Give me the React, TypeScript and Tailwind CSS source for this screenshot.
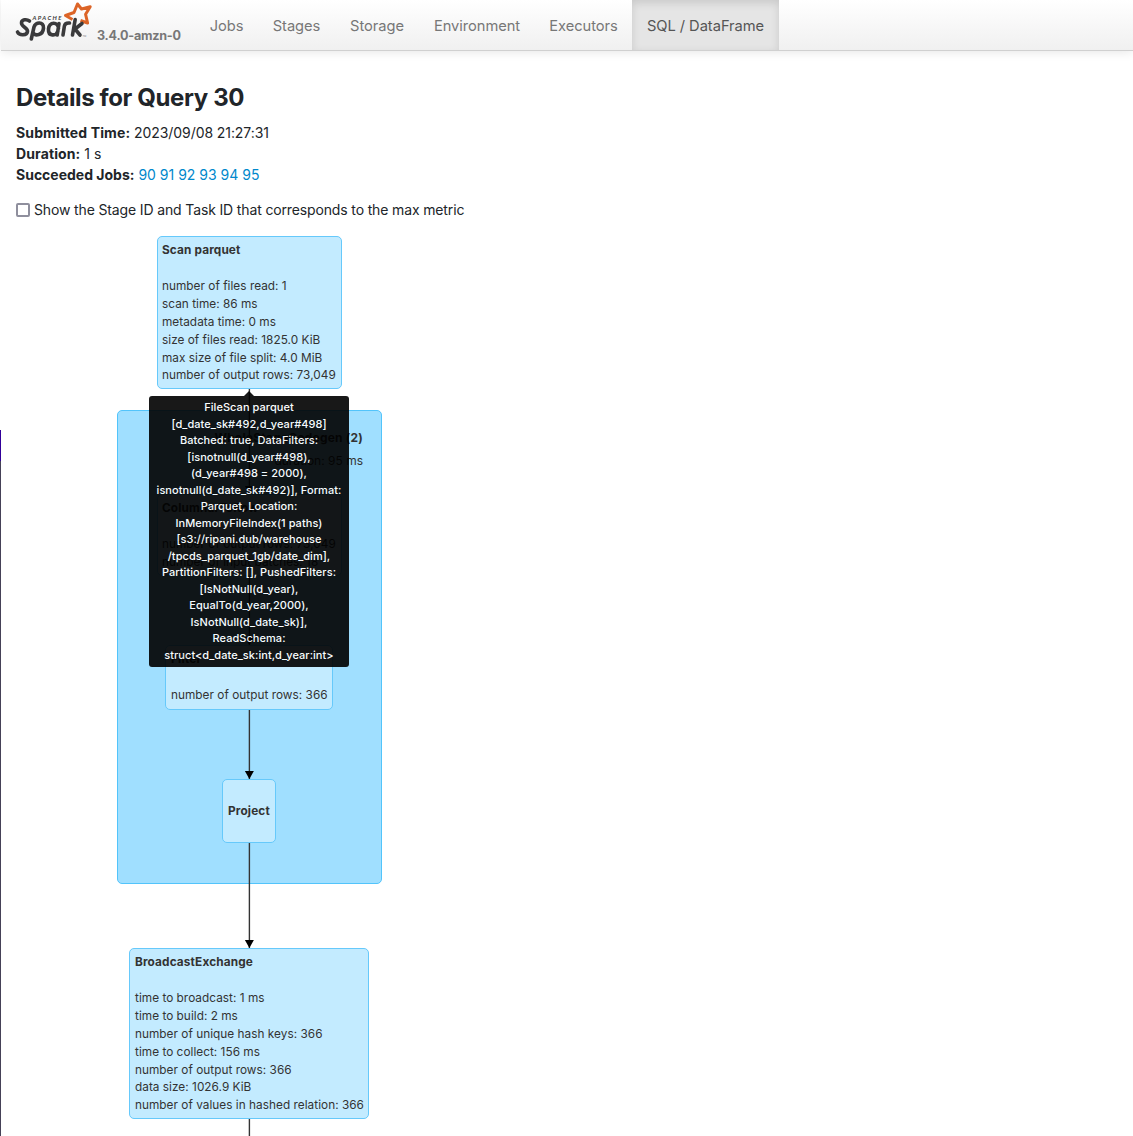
import React from "react";

const navItems = [
  { label: "Jobs", cls: "w-[63px]" },
  { label: "Stages", cls: "w-[77px]" },
  { label: "Storage", cls: "w-[84px]" },
  { label: "Environment", cls: "w-[116px]" },
  { label: "Executors", cls: "w-[97px]" },
];

function SparkLogo() {
  return (
    <svg className="mt-px h-[42px] w-[80px] shrink-0" viewBox="0 0 80 42" fill="none">
      <path
        d="M57.500 18.500 L50.500 14.500 L59 11.500 L62.500 3 L66.500 8 L75.200 5.700 L70.600 13.300 L72.600 22 L65.500 19.500"
        stroke="#dc6427"
        strokeWidth="3"
        strokeLinejoin="round"
      />
      <g stroke="#3a3a3c" strokeWidth="3.6" strokeLinecap="round" strokeLinejoin="round">
        <path d="M14.500 20 C11.500 17.800 6.500 18.500 6.500 22 C6.500 26 13 26.500 12.500 30.500 C12 34.500 4.500 35 2.500 31" />
        <path d="M16.300 38 L19 26 C20.300 20.500 29 20.500 28.500 27 C28 34.500 20 35.500 18 31.500" />
        <path d="M44 22.500 L42.200 34 M43.500 27.500 C43 20.500 34.500 20.500 33.500 28 C33 35.500 41 35.500 43 30" />
        <path d="M48 34 L49.400 25 C50 22 52 21.800 54.500 22" />
        <path d="M57.500 34 L60.200 18.500 M67 22.500 L60 28 L65 34" />
      </g>
      <text x="17.500" y="19" fill="#3a3a3c" className="font-['Lato'] text-[6px] font-bold italic" textLength="29" lengthAdjust="spacing">APACHE</text>
      <text x="67.500" y="36" fill="#777777" className="font-['Inter'] text-[2.5px]">TM</text>
    </svg>
  );
}

function Header() {
  return (
    <header className="ml-px flex h-[51px] items-stretch border-b border-[#d0d0d0] bg-linear-to-b from-white to-[#f0f0f0] pl-[14px] shadow-[0_1px_10px_rgba(0,0,0,0.1)]">
      <SparkLogo />
      <span className="mt-[26px] w-[100px] pl-[2px] text-[12.6px] leading-[20px] font-bold tracking-[-0.25px] text-[#777777]">3.4.0-amzn-0</span>
      <nav className="flex items-stretch text-[14.7px] leading-[52px] tracking-[-0.05px] text-[#777777]">
        {navItems.map((n) => (
          <a key={n.label} className={`block h-[50px] whitespace-nowrap text-center ${n.cls}`}>{n.label}</a>
        ))}
        <a className="block h-[50px] w-[147px] whitespace-nowrap bg-[#e5e5e5] text-center text-[#555555] shadow-[inset_0_3px_8px_rgba(0,0,0,0.125)]">SQL / DataFrame</a>
      </nav>
    </header>
  );
}

function Arrow({ cls }: { cls: string }) {
  return (
    <svg className={`absolute left-[244px] w-[11px] ${cls}`} fill="none">
      <line x1="5.400" y1="0" x2="5.400" y2="100%" stroke="#333333" strokeWidth="1.400" />
      <svg y="100%" overflow="visible"><path d="M0.900 -8 H9.900 L5.400 0 Z" fill="#000000" /></svg>
    </svg>
  );
}

function Node({ cls, title, lines }: { cls: string; title: string; lines: string[] }) {
  return (
    <div className={`absolute rounded-[5px] border border-[#66c9fb] bg-[#c3ebff] text-[11.8px] leading-[17.9px] text-[#333333] ${cls}`}>
      <div className="mb-[18px] whitespace-nowrap font-bold tracking-[0.14px]">{title}</div>
      {lines.map((l) => (
        <div key={l} className="whitespace-nowrap tracking-[0.03px]">{l}</div>
      ))}
    </div>
  );
}

const tooltip = [
  "FileScan parquet",
  "[d_date_sk#492,d_year#498]",
  "Batched: true, DataFilters:",
  "[isnotnull(d_year#498),",
  "(d_year#498 = 2000),",
  "isnotnull(d_date_sk#492)], Format:",
  "Parquet, Location:",
  "InMemoryFileIndex(1 paths)",
  "[s3://ripani.dub/warehouse",
  "/tpcds_parquet_1gb/date_dim],",
  "PartitionFilters: [], PushedFilters:",
  "[IsNotNull(d_year),",
  "EqualTo(d_year,2000),",
  "IsNotNull(d_date_sk)],",
  "ReadSchema:",
  "struct<d_date_sk:int,d_year:int>",
];

function Plan() {
  return (
    <div className="absolute inset-0">
      <div className="absolute left-[117px] top-[410px] h-[473.500px] w-[265px] rounded-[5px] border border-[#52c4fb] bg-[#a0dfff] pr-[18px] pt-[18px] text-right text-[12px] leading-[18px] text-[#333333]">
        <div className="font-bold tracking-[0.2px]">WholeStageCodegen (2)</div>
        <div className="mt-[5px]">duration: 95 ms</div>
      </div>
      <Node cls="left-[157px] top-[236px] h-[153px] w-[185px] pt-[5px] pl-[4px]" title="Scan parquet" lines={["number of files read: 1", "scan time: 86 ms", "metadata time: 0 ms", "size of files read: 1825.0 KiB", "max size of file split: 4.0 MiB", "number of output rows: 73,049"]} />
      <Node cls="left-[157px] top-[494px] h-[82px] w-[185px] pt-[5px] pl-[4px]" title="ColumnarToRow" lines={["number of output rows: 73,049", "number of input batches: 18"]} />
      <Node cls="left-[165px] top-[645px] h-[65px] w-[168px] pt-[5px] pl-[5px]" title="Filter" lines={["number of output rows: 366"]} />
      <Node cls="left-[222px] top-[779px] h-[64px] w-[54px] pt-[23px] pl-[5px]" title="Project" lines={[]} />
      <Node cls="left-[129px] top-[948px] h-[171px] w-[240px] pt-[5px] pl-[5px]" title="BroadcastExchange" lines={["time to broadcast: 1 ms", "time to build: 2 ms", "number of unique hash keys: 366", "time to collect: 156 ms", "number of output rows: 366", "data size: 1026.9 KiB", "number of values in hashed relation: 366"]} />
      <Arrow cls="top-[389px] h-[105px]" />
      <Arrow cls="top-[576px] h-[69px]" />
      <Arrow cls="top-[710px] h-[69px]" />
      <Arrow cls="top-[843px] h-[105px]" />
      <Arrow cls="top-[1119px] h-[60px]" />
      <div className="absolute left-[149px] top-[391px] w-[200px] opacity-90">
        <svg className="mx-auto block h-[5px] w-[10px]" viewBox="0 0 10 5"><path d="M0 5 L5 0 L10 5 Z" fill="#000000" /></svg>
        <div className="h-[271px] rounded-[3px] bg-black pt-[3px] text-center text-[11px] leading-[16.530px] font-medium tracking-[0.05px] text-white">
          {tooltip.map((l) => (
            <div key={l} className="whitespace-nowrap">{l}</div>
          ))}
        </div>
      </div>
    </div>
  );
}

export default function App() {
  return (
    <div className="relative h-[1136px] w-[1133px] overflow-hidden bg-white font-['Inter',sans-serif] text-[#212529]">
      <Header />
      <main className="px-4 pt-[32px] text-[14px] leading-[21px]">
        <h1 className="text-[24px] leading-[30px] font-bold tracking-[-0.38px]">Details for Query 30</h1>
        <div className="mt-[9px] tracking-[-0.08px]"><b className="tracking-[0.13px]">Submitted Time:</b> 2023/09/08 21:27:31</div>
        <div><b className="tracking-[0.11px]">Duration:</b> 1 s</div>
        <div><b>Succeeded Jobs:</b> <span className="text-[#0088cc]">90 91 92 93 94 95</span></div>
        <label className="mt-[14px] flex items-center tracking-[-0.14px]"><span className="mr-[4px] h-[14px] w-[14px] rounded-[2px] border-2 border-[#8f8f9d] bg-white" />Show the Stage ID and Task ID that corresponds to the max metric</label>
      </main>
      <Plan />
      <div className="absolute left-0 top-[430px] flex h-[706px] w-px flex-col">
        <div className="h-[31px] bg-[#31009a]" />
        <div className="flex-1 bg-[#454157]" />
      </div>
    </div>
  );
}
